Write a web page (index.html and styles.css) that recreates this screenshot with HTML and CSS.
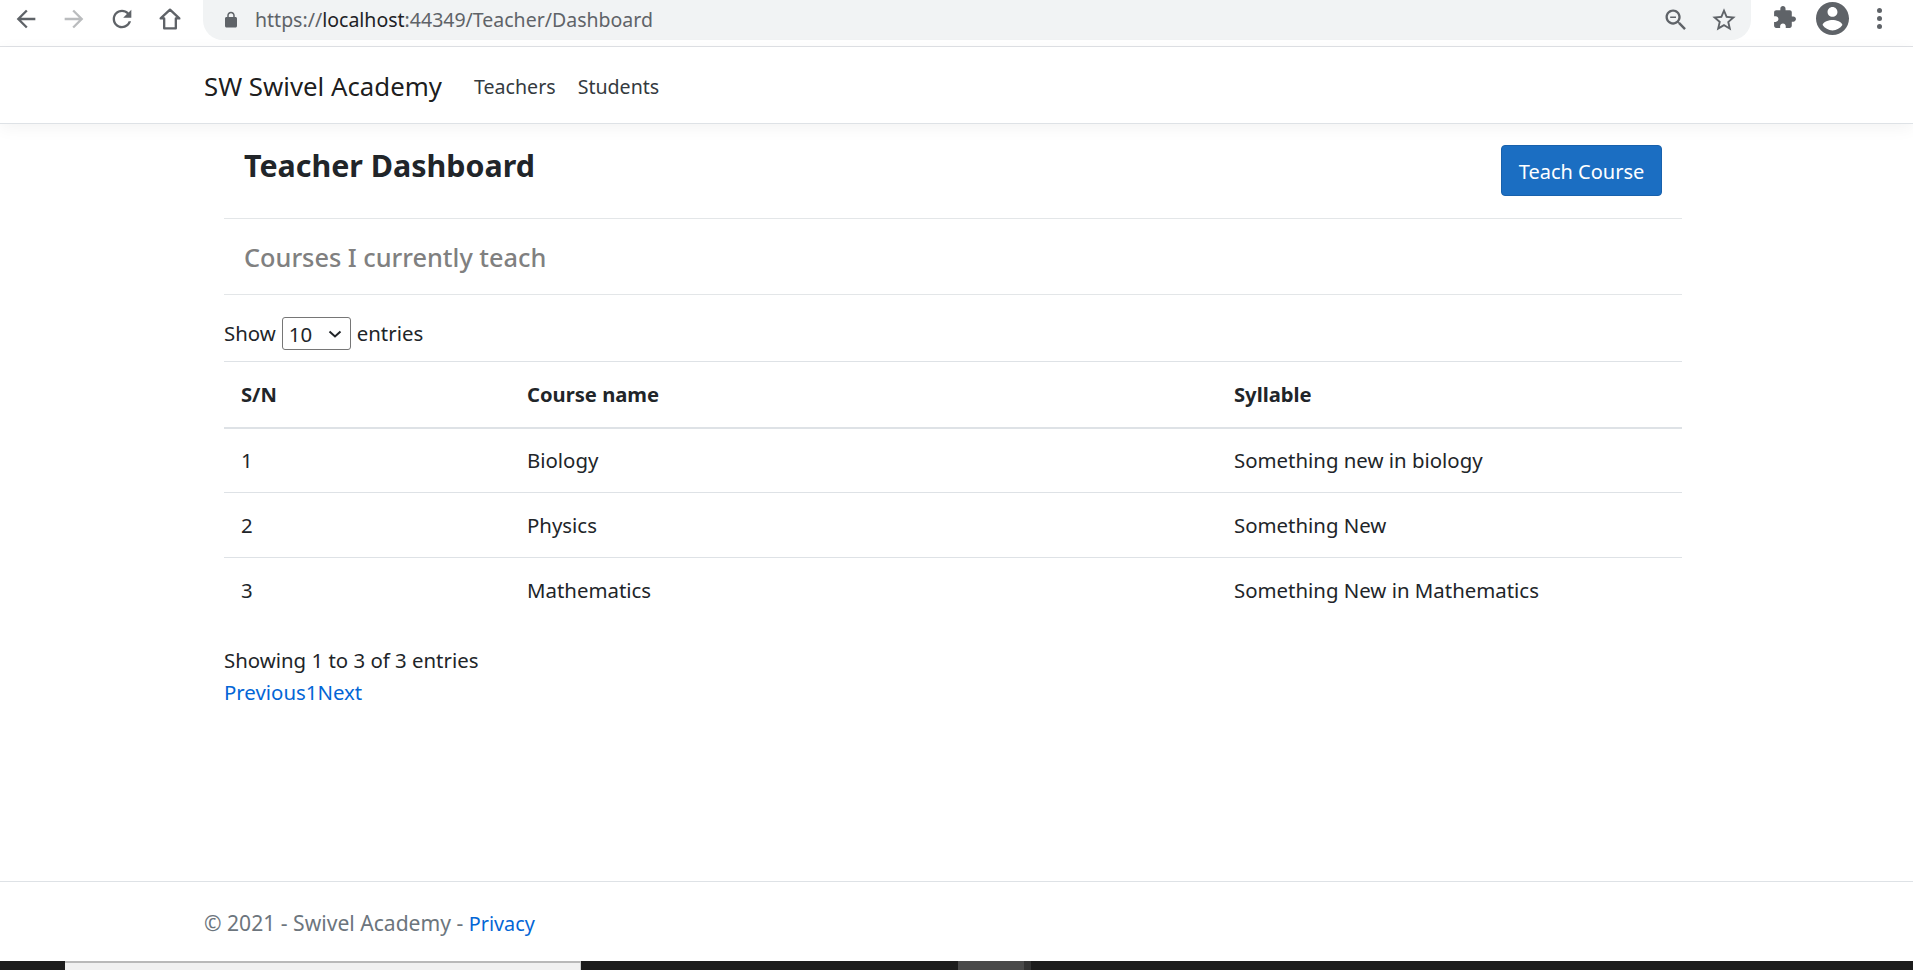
FILE: index.html
```html
<!DOCTYPE html>
<html lang="en">

<head>
    <meta charset="UTF-8">
    <meta name="viewport" content="width=device-width, initial-scale=1.0">
    <title>Teacher Dashboard</title>
    <link rel="stylesheet" href="styles.css">
</head>

<body>
    <!-- browser toolbar -->
    <div class="toolbar">
        <div class="toolbar-nav">
            <svg class="ico" viewBox="0 0 24 24"><path d="M20 11H7.83l5.59-5.59L12 4l-8 8 8 8 1.41-1.41L7.83 13H20v-2z"/></svg>
            <svg class="ico ico-off" viewBox="0 0 24 24"><path d="M12 4l-1.41 1.41L16.17 11H4v2h12.17l-5.58 5.59L12 20l8-8z"/></svg>
            <svg class="ico" viewBox="0 0 24 24"><path d="M17.65 6.35C16.2 4.9 14.21 4 12 4c-4.42 0-7.99 3.58-7.99 8s3.57 8 7.99 8c3.73 0 6.84-2.55 7.73-6h-2.08c-.82 2.33-3.04 4-5.65 4-3.31 0-6-2.69-6-6s2.69-6 6-6c1.66 0 3.14.69 4.22 1.78L13 11h7V4l-2.35 2.35z"/></svg>
            <svg class="ico" viewBox="0 0 24 24"><path class="home-line" d="M12 4L4 11.5h3V20h10v-8.500h3z"/></svg>
        </div>
        <div class="omnibox">
            <svg class="lock" viewBox="0 0 24 24"><path d="M18 8h-1V6c0-2.760-2.240-5-5-5S7 3.240 7 6v2H6c-1.100 0-2 .9-2 2v10c0 1.100.9 2 2 2h12c1.100 0 2-.9 2-2V10c0-1.100-.9-2-2-2zM9 6c0-1.660 1.340-3 3-3s3 1.340 3 3v2H9V6z"/></svg>
            <span class="url">https://<b>localhost</b>:44349/Teacher/Dashboard</span>
            <svg class="ico ico-zoom" viewBox="0 0 24 24"><path d="M15.500 14h-.79l-.28-.27C15.410 12.590 16 11.110 16 9.500 16 5.910 13.090 3 9.500 3S3 5.910 3 9.500 5.910 16 9.500 16c1.610 0 3.090-.59 4.230-1.570l.27.28v.79l5 4.990L20.490 19l-4.990-5zm-6 0C7.010 14 5 11.990 5 9.500S7.010 5 9.500 5 14 7.010 14 9.500 11.990 14 9.500 14zM7 9h5v1.200H7z"/></svg>
            <svg class="ico" viewBox="0 0 24 24"><path d="M22 9.240l-7.190-.62L12 2 9.190 8.630 2 9.240l5.460 4.730L5.820 21 12 17.270 18.180 21l-1.630-7.030L22 9.240zM12 15.400l-3.760 2.270 1-4.280-3.320-2.880 4.380-.38L12 6.100l1.710 4.040 4.380.38-3.320 2.880 1 4.280L12 15.400z"/></svg>
        </div>
        <div class="toolbar-end">
            <svg class="ico ico-ext" viewBox="0 0 24 24"><path d="M20.500 11H19V7c0-1.100-.9-2-2-2h-4V3.500C13 2.120 11.880 1 10.500 1S8 2.120 8 3.500V5H4c-1.100 0-1.990.9-1.990 2v3.800H3.500c1.490 0 2.700 1.210 2.700 2.700s-1.210 2.700-2.700 2.700H2V20c0 1.100.9 2 2 2h3.800v-1.500c0-1.490 1.210-2.700 2.700-2.700 1.490 0 2.700 1.210 2.700 2.700V22H17c1.100 0 2-.9 2-2v-4h1.500c1.380 0 2.500-1.120 2.500-2.500S21.880 11 20.500 11z"/></svg>
            <svg class="avatar" viewBox="2 2 20 20"><path d="M12 2C6.480 2 2 6.480 2 12s4.480 10 10 10 10-4.480 10-10S17.520 2 12 2zm0 3c1.660 0 3 1.340 3 3s-1.340 3-3 3-3-1.340-3-3 1.340-3 3-3zm0 14.200c-2.500 0-4.710-1.280-6-3.220.03-1.990 4-3.080 6-3.080 1.990 0 5.970 1.090 6 3.080-1.290 1.940-3.500 3.220-6 3.220z"/></svg>
            <div class="dots"><i></i><i></i><i></i></div>
        </div>
    </div>

    <nav class="navbar">
        <a class="brand" href="#">SW Swivel Academy</a>
        <a class="nav-link" href="#">Teachers</a>
        <a class="nav-link" href="#">Students</a>
    </nav>

    <main class="content">
        <div class="head-row">
            <h1>Teacher Dashboard</h1>
            <a class="btn" href="#">Teach Course</a>
        </div>
        <h2>Courses I currently teach</h2>
        <div class="length-row">
            Show
            <span class="select-wrap">
                <select class="length-select">
                    <option>10</option>
                    <option>25</option>
                    <option>50</option>
                </select>
                <svg class="chevron" viewBox="0 0 14 8"><path d="M1.500 1.500L7 6.500l5.500-5"/></svg>
            </span>
            entries
        </div>
        <table class="courses">
            <colgroup>
                <col class="col-sn">
                <col class="col-name">
                <col>
            </colgroup>
            <thead>
                <tr>
                    <th>S/N</th>
                    <th>Course name</th>
                    <th>Syllable</th>
                </tr>
            </thead>
            <tbody>
                <tr>
                    <td>1</td>
                    <td>Biology</td>
                    <td>Something new in biology</td>
                </tr>
                <tr>
                    <td>2</td>
                    <td>Physics</td>
                    <td>Something New</td>
                </tr>
                <tr>
                    <td>3</td>
                    <td>Mathematics</td>
                    <td>Something New in Mathematics</td>
                </tr>
            </tbody>
        </table>
        <div class="info">Showing 1 to 3 of 3 entries</div>
        <div class="pager"><a href="#">Previous</a><a href="#">1</a><a href="#">Next</a></div>
    </main>

    <footer class="footer">
        &copy; 2021 - Swivel Academy - <a href="#">Privacy</a>
    </footer>

    <!-- desktop taskbar cut off at the bottom -->
    <div class="taskbar">
        <div class="task-tab"></div>
        <div class="task-grey"></div>
        <div class="task-edge"></div>
    </div>
</body>

</html>
```

FILE: styles.css
```css
* {
    box-sizing: border-box;
}

html,
body {
    margin: 0;
    height: 100%;
}

body {
    display: flex;
    flex-direction: column;
    height: 970px;
    overflow: hidden;
    background: #fff;
    color: #212529;
    font-family: "Noto Sans", "Open Sans", sans-serif;
    font-size: 20.4px;
    line-height: 1.5;
}

a {
    color: #0366d6;
    text-decoration: none;
}

/* toolbar */
.toolbar {
    display: flex;
    align-items: flex-start;
    height: 47px;
    flex-shrink: 0;
    border-bottom: 1px solid #dfe1e5;
}

.ico {
    width: 28px;
    height: 28px;
    fill: #5f6368;
}

.ico-off {
    fill: #babcbe;
}

.ico-ext {
    width: 25px;
    height: 25px;
    margin-top: -1px;
}

.home-line {
    fill: none;
    stroke: #5f6368;
    stroke-width: 2;
    stroke-linejoin: round;
}

.toolbar-nav {
    display: flex;
    gap: 20px;
    width: 203px;
    padding: 5px 0 0 12px;
}

.omnibox {
    display: flex;
    align-items: center;
    width: 1548px;
    height: 40px;
    padding: 0 13px 0 19px;
    border-radius: 0 0 20px 20px;
    background: #f1f3f4;
}

.lock {
    width: 18px;
    height: 18px;
    fill: #5f6368;
}

.url {
    flex: 1;
    margin-left: 15px;
    color: #5f6368;
    font-size: 19.5px;
    white-space: nowrap;
}

.url b {
    color: #202124;
    font-weight: 400;
}

.ico-zoom {
    margin-right: 20px;
}

.toolbar-end {
    display: flex;
    align-items: center;
    height: 36px;
    padding-left: 21px;
}

.avatar {
    width: 33px;
    height: 33px;
    margin-left: 19px;
    fill: #5f6368;
}

.dots {
    display: flex;
    flex-direction: column;
    gap: 3px;
    margin-left: 28px;
}

.dots i {
    width: 5px;
    height: 5px;
    border-radius: 50%;
    background: #5f6368;
}

/* navbar */
.navbar {
    display: flex;
    align-items: center;
    height: 77px;
    flex-shrink: 0;
    padding: 3px 0 0 204px;
    border-bottom: 1px solid #dee2e6;
    box-shadow: 0 4px 16px rgba(0, 0, 0, .05);
}

.brand {
    margin-right: 21px;
    color: rgba(0, 0, 0, .9);
    font-size: 25.800px;
}

.nav-link {
    padding: 0 11px;
    color: #343a40;
    font-size: 19.6px;
}

/* main */
.content {
    flex: 1;
    width: 1458px;
    margin-left: 224px;
}

.head-row {
    display: flex;
    justify-content: space-between;
    height: 95px;
    padding: 21px 20px 0 20px;
    border-bottom: 1px solid #e3e6e8;
}

h1 {
    margin: 1px 0 0;
    font-size: 30.400px;
    font-weight: 700;
    line-height: 40px;
}

.btn {
    width: 161px;
    height: 51px;
    border: 1px solid #1861ac;
    border-radius: 4px;
    background: #1b6ec2;
    color: #fff;
    font-size: 20px;
    line-height: 51px;
    text-align: center;
}

h2 {
    height: 76px;
    margin: 0;
    padding-left: 20px;
    border-bottom: 1px solid #e3e6e8;
    color: #808080;
    font-size: 25.300px;
    font-weight: 500;
    line-height: 77px;
}

.length-row {
    display: flex;
    align-items: center;
    gap: 6px;
    height: 66px;
    padding-top: 11px;
}

.select-wrap {
    position: relative;
    display: flex;
}

.length-select {
    width: 69px;
    height: 33px;
    padding-left: 6px;
    border: 1px solid #767676;
    border-radius: 3px;
    background: #fff;
    color: #212529;
    font-family: inherit;
    font-size: 20.4px;
    appearance: none;
}

.chevron {
    position: absolute;
    top: 13px;
    right: 9px;
    width: 14px;
    height: 8px;
    fill: none;
    stroke: #212529;
    stroke-width: 2;
    pointer-events: none;
}

.courses {
    width: 100%;
    border-collapse: collapse;
    table-layout: fixed;
}

.col-sn {
    width: 286px;
}

.col-name {
    width: 707px;
}

.courses th,
.courses td {
    height: 65px;
    padding: 0 17px;
    border-top: 1px solid #dee2e6;
    text-align: left;
}

.courses th {
    height: 66px;
    border-bottom: 2px solid #dee2e6;
    font-size: 20.200px;
}

.info {
    margin-top: 21px;
    line-height: 32px;
}

.pager {
    line-height: 32px;
}

/* footer */
.footer {
    flex-shrink: 0;
    height: 80px;
    padding: 25px 0 0 204px;
    border-top: 1px solid #dee2e6;
    color: #6c757d;
    font-size: 21.100px;
}

.footer a {
    font-size: 19.800px;
}

/* taskbar */
.taskbar {
    display: flex;
    flex-shrink: 0;
    height: 9px;
    padding-left: 65px;
    background: #1c1c1c;
}

.task-tab {
    width: 516px;
    border-top: 2px solid #b8b8b8;
    border-right: 1px solid #ccc;
    background: #f0f0f0;
}

.task-grey {
    width: 66px;
    margin-left: 377px;
    background: #4a4a4a;
}

.task-edge {
    width: 7px;
    background: #333;
}
```
